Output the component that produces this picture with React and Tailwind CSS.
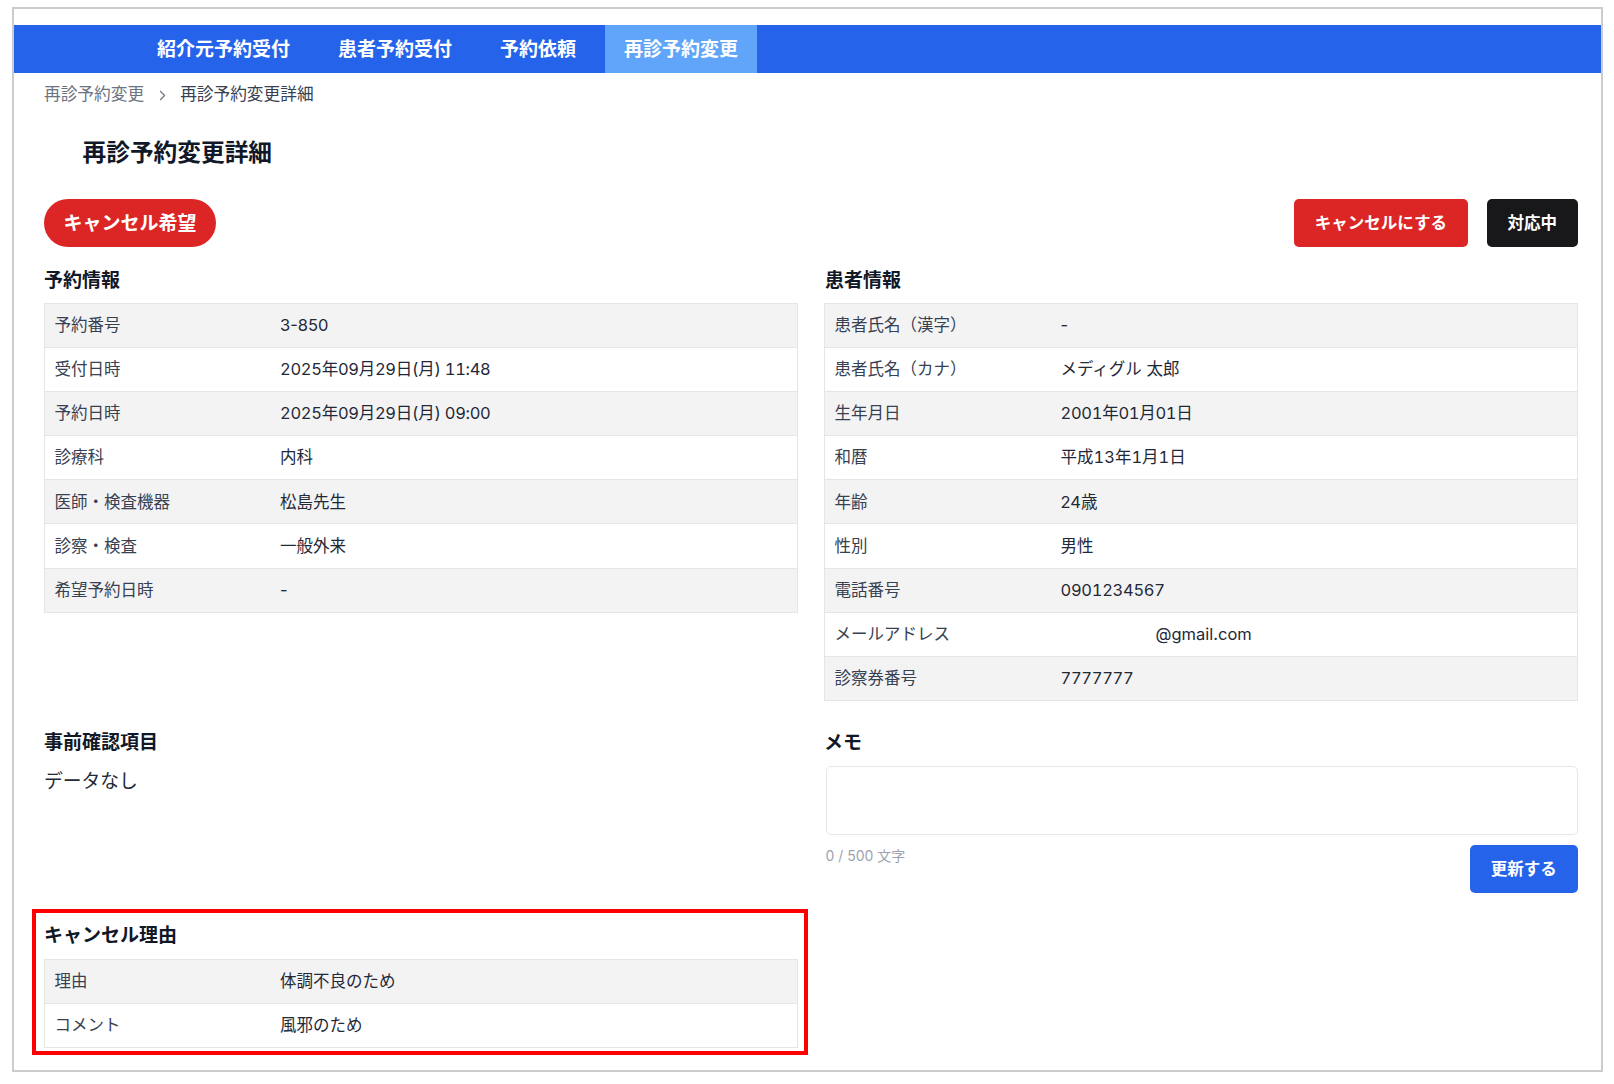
import { ChevronRight } from "lucide-react";

const NUM = "tabular-nums tracking-[-0.28px]";

const NAV_TABS = [
  { label: "紹介元予約受付" },
  { label: "患者予約受付" },
  { label: "予約依頼" },
  { label: "再診予約変更", active: true },
];

const RESERVATION_ROWS = [
  ["予約番号", "3-850"],
  ["受付日時", "2025年09月29日(月) 11:48", NUM],
  ["予約日時", "2025年09月29日(月) 09:00", NUM],
  ["診療科", "内科"],
  ["医師・検査機器", "松島先生"],
  ["診察・検査", "一般外来"],
  ["希望予約日時", "-"],
];

const PATIENT_ROWS = [
  ["患者氏名（漢字）", "-"],
  ["患者氏名（カナ）", "メディグル 太郎"],
  ["生年月日", "2001年01月01日", NUM],
  ["和暦", "平成13年1月1日", "tabular-nums"],
  ["年齢", "24歳"],
  ["性別", "男性"],
  ["電話番号", "0901234567", NUM],
  // address part is blanked out in the screenshot
  ["メールアドレス", "@gmail.com", "pl-[95px]"],
  ["診察券番号", "7777777", NUM],
];

const CANCEL_ROWS = [
  ["理由", "体調不良のため"],
  ["コメント", "風邪のため"],
];

function SectionTitle({ children, className = "" }) {
  return <h2 className={`h-[26px] mb-[9.5px] text-[19px] leading-[26px] font-bold text-[#111827] ${className}`}>{children}</h2>;
}

function InfoTable({ rows, labelClass = "w-[235px]" }) {
  return (
    <div className="border-x border-t border-[#e5e5e5]">
      {rows.map(([label, value, valueClass], i) => (
        <div
          key={label}
          className={`flex items-center h-[44.1px] border-b border-[#e5e5e5] text-[16.5px] ${i % 2 === 0 ? "bg-[#f3f3f4]" : "bg-white"}`}
        >
          <div className={`pl-[9.5px] shrink-0 text-[#374151] ${labelClass}`}>{label}</div>
          <div className={`text-[#1f2937] ${valueClass || ""}`}>{value}</div>
        </div>
      ))}
    </div>
  );
}

export default function App() {
  return (
    <div className="bg-white h-[1084px] pt-[7px] pl-[11.5px] [font-family:Inter,'Noto_Sans_CJK_JP',sans-serif]">
      <div className="box-border w-[1591px] h-[1065px] border-2 border-[#cccccc] pt-[16px]">
        {/* Nav */}
        <nav className="flex h-[48px] ml-[0.5px] pl-[124px] gap-[10px] bg-[#2563eb]">
          {NAV_TABS.map((tab) => (
            <div
              key={tab.label}
              className={`flex items-center px-[19px] pt-[2px] text-[19px] font-bold text-white ${tab.active ? "bg-[#60a5fa]" : ""}`}
            >
              {tab.label}
            </div>
          ))}
        </nav>

        <div className="pl-[30.5px] pr-[22.5px]">
          {/* Breadcrumb */}
          <div className="flex items-center h-[24px] mt-[10px] text-[16.7px] text-[#6b7280]">
            <span>再診予約変更</span>
            <ChevronRight size={17} strokeWidth={1.5} className="mx-[9.5px] text-[#6b7280]" />
            <span className="text-[#374151]">再診予約変更詳細</span>
          </div>

          <h1 className="h-[32px] mt-[30px] pl-[38.5px] text-[23.7px] leading-[32px] font-bold text-[#111827]">再診予約変更詳細</h1>

          {/* Status + actions */}
          <div className="flex items-center justify-between mt-[30px]">
            <div className="flex items-center h-[48px] px-[19.5px] pt-[2px] rounded-full bg-[#dc2626] text-[19px] font-bold text-white">
              キャンセル希望
            </div>
            <div className="flex gap-[18.5px]">
              <button className="h-[48px] px-[21px] rounded-[5px] bg-[#dc2626] text-[16.5px] font-bold text-white">
                キャンセルにする
              </button>
              <button className="h-[48px] px-[21px] rounded-[5px] bg-[#18181b] text-[16.5px] font-bold text-white">
                対応中
              </button>
            </div>
          </div>

          <div className="grid grid-cols-2 gap-x-[26px] mt-[20.5px]">
            <section>
              <SectionTitle>予約情報</SectionTitle>
              <InfoTable rows={RESERVATION_ROWS} />
            </section>
            <section>
              <SectionTitle className="pl-[1px]">患者情報</SectionTitle>
              <InfoTable rows={PATIENT_ROWS} labelClass="w-[235.5px]" />
            </section>

            <section className="mt-[29px]">
              <SectionTitle>事前確認項目</SectionTitle>
              <p className="pt-[3px] text-[18.8px] leading-[28px] text-[#1f2937]">データなし</p>
            </section>
            <section className="mt-[29px]">
              <SectionTitle>メモ</SectionTitle>
              <div className="pt-[1px]">
                <textarea className="block box-border w-[752px] ml-[1.5px] h-[69px] rounded-[5px] border border-[#e5e7eb] resize-none" />
              </div>
              <div className="flex justify-between items-start w-[752px] ml-[1.5px] mt-[10px]">
                <span className="mt-[1px] text-[14px] leading-[20px] text-[#9ca3af]">0 / 500 文字</span>
                <button className="h-[48px] px-[20.75px] pt-[1px] rounded-[5px] bg-[#2563eb] text-[16.5px] font-bold text-white">
                  更新する
                </button>
              </div>
            </section>

            <section className="relative mt-[30px]">
              <SectionTitle>キャンセル理由</SectionTitle>
              <InfoTable rows={CANCEL_ROWS} />
              {/* Annotation box */}
              <div className="absolute -left-[12px] -right-[10px] -top-[14px] -bottom-[7px] border-4 border-[#ff0000] pointer-events-none" />
            </section>
          </div>
        </div>
      </div>
    </div>
  );
}
